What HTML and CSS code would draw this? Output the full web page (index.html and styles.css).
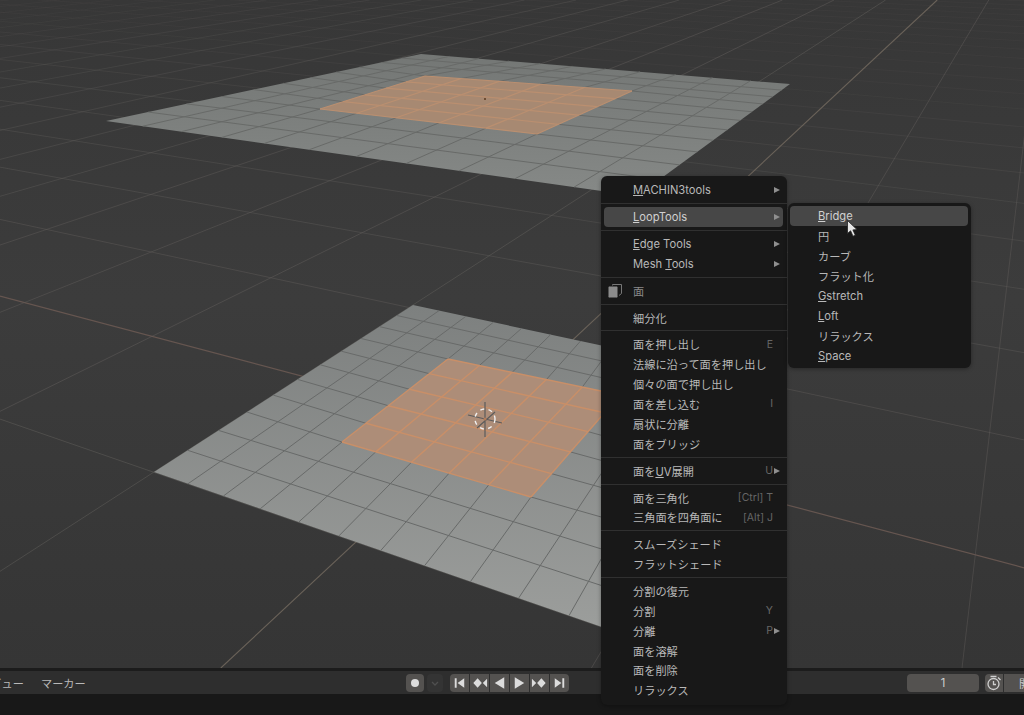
FILE: index.html
```html
<!DOCTYPE html>
<html lang="ja">
<head>
<meta charset="utf-8">
<title>Blender context menu</title>
<link rel="stylesheet" href="styles.css">
</head>
<body>
<div class="app">
  <main class="viewport">
    <svg class="scene" id="scene" viewBox="0 0 1024 668" xmlns="http://www.w3.org/2000/svg">
      <defs>
        <linearGradient id="bg" x1="0" y1="0" x2="0" y2="1">
          <stop offset="0" stop-color="#373737"/>
          <stop offset="0.45" stop-color="#3c3c3c"/>
          <stop offset="1" stop-color="#353535"/>
        </linearGradient>
        <linearGradient id="planeTop" gradientUnits="userSpaceOnUse" x1="0" y1="54" x2="0" y2="196">
          <stop offset="0" stop-color="#747775"/>
          <stop offset="1" stop-color="#868987"/>
        </linearGradient>
        <linearGradient id="planeBottom" gradientUnits="userSpaceOnUse" x1="0" y1="305" x2="0" y2="634">
          <stop offset="0" stop-color="#7d807f"/>
          <stop offset="1" stop-color="#9c9e9c"/>
        </linearGradient>
      </defs>
      <rect class="bg" width="1024" height="668"/>
      <g id="floor"></g>
      <g id="planes"></g>
      <g class="cursor3d">
        <path class="cursor-axes" d="M485 402V437M468 415L502 423M477 428L495 412"/>
        <circle class="cursor-ring" cx="485" cy="419" r="10"/>
        <circle class="cursor-dot" cx="485" cy="419" r="1.5"/>
      </g>
      <circle class="origin-dot" cx="485" cy="99" r="1"/>
    </svg>

    <nav class="menu menu-main">
      <div class="row"><span class="label"><u>M</u>ACHIN3tools</span><span class="arrow"></span></div>
      <div class="sep"></div>
      <div class="row active"><span class="label"><u>L</u>oopTools</span><span class="arrow"></span></div>
      <div class="sep"></div>
      <div class="row"><span class="label"><u>E</u>dge Tools</span><span class="arrow"></span></div>
      <div class="row"><span class="label">Mesh <u>T</u>ools</span><span class="arrow"></span></div>
      <div class="sep"></div>
      <div class="row row-title">
        <svg class="face-icon" viewBox="0 0 16 16" width="16" height="16">
          <path class="face-back" d="M5.5 3.5V1.5H14.5V10.5L12 12.5"/>
          <rect class="face-front" x="1" y="3" width="10" height="12" rx="1.5"/>
        </svg>
        <span class="label dim">面</span>
      </div>
      <div class="sep"></div>
      <div class="row"><span class="label">細分化</span></div>
      <div class="sep"></div>
      <div class="row"><span class="label">面を押し出し</span><span class="key">E</span></div>
      <div class="row"><span class="label">法線に沿って面を押し出し</span></div>
      <div class="row"><span class="label">個々の面で押し出し</span></div>
      <div class="row"><span class="label">面を差し込む</span><span class="key">I</span></div>
      <div class="row"><span class="label">扇状に分離</span></div>
      <div class="row"><span class="label">面をブリッジ</span></div>
      <div class="sep"></div>
      <div class="row"><span class="label">面を<u>U</u>V展開</span><span class="key">U</span><span class="arrow tight"></span></div>
      <div class="sep"></div>
      <div class="row"><span class="label">面を三角化</span><span class="key">[Ctrl] T</span></div>
      <div class="row"><span class="label">三角面を四角面に</span><span class="key">[Alt] J</span></div>
      <div class="sep"></div>
      <div class="row"><span class="label">スムーズシェード</span></div>
      <div class="row"><span class="label">フラットシェード</span></div>
      <div class="sep"></div>
      <div class="row"><span class="label">分割の復元</span></div>
      <div class="row"><span class="label">分割</span><span class="key">Y</span></div>
      <div class="row"><span class="label">分離</span><span class="key">P</span><span class="arrow tight"></span></div>
      <div class="row"><span class="label">面を溶解</span></div>
      <div class="row"><span class="label">面を削除</span></div>
      <div class="row"><span class="label">リラックス</span></div>
    </nav>

    <nav class="menu menu-sub">
      <div class="row active"><span class="label"><u>B</u>ridge</span></div>
      <div class="row"><span class="label">円</span></div>
      <div class="row"><span class="label">カーブ</span></div>
      <div class="row"><span class="label">フラット化</span></div>
      <div class="row"><span class="label"><u>G</u>stretch</span></div>
      <div class="row"><span class="label"><u>L</u>oft</span></div>
      <div class="row"><span class="label">リラックス</span></div>
      <div class="row"><span class="label"><u>S</u>pace</span></div>
    </nav>

    <svg class="pointer" viewBox="0 0 12 17" width="12" height="17">
      <path d="M0.5 0.5V13.5L3.6 10.8L6 16.2L8.3 15.2L5.9 9.9L10 9.6Z"/>
    </svg>
  </main>

  <footer class="timeline">
    <div class="tl-menus">
      <span>ビュー</span>
      <span>マーカー</span>
    </div>
    <div class="transport">
      <button class="btn btn-record" aria-label="record"><svg viewBox="0 0 18 18" width="18" height="18"><circle class="ico" cx="9" cy="9" r="4"/></svg></button>
      <button class="btn btn-drop" aria-label="options"><svg viewBox="0 0 16 18" width="16" height="18"><path class="ico-line" d="M5 8L8 11L11 8"/></svg></button>
      <div class="btn-group">
        <button class="btn" aria-label="jump start"><svg viewBox="0 0 20 18" width="20" height="18"><path class="ico" d="M5 4H7V14H5ZM15 4V14L8 9Z"/></svg></button>
        <button class="btn" aria-label="previous key"><svg viewBox="0 0 20 18" width="20" height="18"><path class="ico" d="M8 4L12.5 9L8 14L3.5 9ZM18 4.5V13.5L13.5 9Z"/></svg></button>
        <button class="btn" aria-label="play reverse"><svg viewBox="0 0 20 18" width="20" height="18"><path class="ico" d="M15 3V15L5 9Z"/></svg></button>
        <button class="btn" aria-label="play"><svg viewBox="0 0 20 18" width="20" height="18"><path class="ico" d="M5 3V15L15 9Z"/></svg></button>
        <button class="btn" aria-label="next key"><svg viewBox="0 0 20 18" width="20" height="18"><path class="ico" d="M2 4.5V13.5L6.5 9ZM12 4L16.5 9L12 14L7.5 9Z"/></svg></button>
        <button class="btn" aria-label="jump end"><svg viewBox="0 0 20 18" width="20" height="18"><path class="ico" d="M5 4V14L12 9ZM13 4H15V14H13Z"/></svg></button>
      </div>
    </div>
    <div class="frame-field">1</div>
    <div class="btn-group clock-group">
      <button class="btn" aria-label="clock"><svg viewBox="0 0 18 18" width="18" height="18"><circle class="ico-line" cx="8.5" cy="10" r="5.5"/><path class="ico-line" d="M8.5 7V10.5H11M5.5 2.5H11.5M13 3.5L15.5 6"/></svg></button>
      <button class="btn btn-cut">開始</button>
    </div>
  </footer>
  <div class="status"></div>
</div>
<script src="script.js"></script>
</body>
</html>
```

FILE: styles.css
```css
* { box-sizing: border-box; }
html, body { margin: 0; height: 100%; }
body {
  background: #181818;
  overflow: hidden;
  font-family: Inter, "Noto Sans CJK JP", "Liberation Sans", sans-serif;
  font-size: 11.2px;
  color: #b8b8b8;
}
.app { display: flex; flex-direction: column; height: 715px; width: 1024px; overflow: hidden; }

/* 3D viewport */
.viewport { position: relative; height: 668px; flex: none; }
.scene { display: block; width: 1024px; height: 668px; }
.bg { fill: url(#bg); }
.cursor-axes { stroke: #5c5c5c; stroke-width: 1.2; fill: none; }
.cursor-ring { fill: none; stroke: #f0f0f0; stroke-width: 1.4; stroke-dasharray: 4 4.4; }
.cursor-dot { fill: #b47b58; }
.origin-dot { fill: #5a3a20; }

/* Popup menus */
.menu {
  position: absolute;
  display: flex;
  flex-direction: column;
  background: #181818;
  border-radius: 6px;
  box-shadow: 0 1px 4px rgba(0, 0, 0, 0.35);
}
.menu-main { left: 601px; top: 176px; width: 186px; height: 529px; padding: 4px 4px 4px 3px; }
.menu-sub { left: 788px; top: 203px; width: 183px; height: 165px; padding: 3px 3px 3px 2px; }
.row {
  display: flex;
  align-items: center;
  flex: none;
  height: 19.85px;
  padding: 0 3px 0 29px;
  border-radius: 4px;
  white-space: nowrap;
}
.menu-sub .row { height: 20px; padding-left: 28px; }
.row.active { background: #474747; color: #d0d0d0; }
.row-title { padding-left: 3px; }
.label { flex: 1; }
.label u { text-underline-offset: 1px; }
.dim { color: #8a8a8a; padding-left: 10px; }
.key { color: #666; font-size: 10.5px; }
.key:last-child { margin-right: 7px; }
.arrow {
  width: 0;
  height: 0;
  border-left: 6px solid #8f8f8f;
  border-top: 3.5px solid transparent;
  border-bottom: 3.5px solid transparent;
}
.arrow.tight { margin-left: 1px; }
.sep { flex: none; height: 7.1px; position: relative; margin: 0 -4px 0 -3px; }
.sep::after {
  content: "";
  position: absolute;
  left: 0;
  right: 0;
  top: 3px;
  height: 1px;
  background: #303030;
}
.face-icon { flex: none; }
.face-back { fill: none; stroke: #777; stroke-width: 1; }
.face-front { fill: #8c8c8c; stroke: #181818; stroke-width: 1; }
.pointer { position: absolute; left: 847px; top: 220px; }
.pointer path { fill: #e6e6e6; stroke: #222; stroke-width: 0.8; }

/* Timeline header */
.timeline {
  flex: none;
  height: 26px;
  display: flex;
  align-items: center;
  background: #2e2e2e;
  border-top: 3px solid #1c1c1c;
}
.tl-menus {
  flex: none;
  display: flex;
  gap: 17px;
  width: 406px;
  color: #b8b8b8;
  overflow: hidden;
}
.tl-menus span:first-child { margin-left: -9.6px; }
.transport { flex: none; display: flex; align-items: center; width: 501px; }
.btn {
  display: flex;
  align-items: center;
  justify-content: center;
  flex: none;
  height: 18px;
  width: 19.8px;
  padding: 0;
  border: 0;
  background: #545250;
  font: inherit;
  color: inherit;
}
.btn-record { width: 18px; border-radius: 4px; }
.btn-drop { width: 16px; margin: 0 7px 0 3px; background: #343434; border-radius: 4px; }
.btn-group { display: flex; gap: 1px; border-radius: 4px; overflow: hidden; }
.btn-group .btn { width: 18.99px; }
.ico { fill: #dcdcdc; }
.btn-drop .ico-line { stroke: #4f4f4f; }
.ico-line { fill: none; stroke: #cfcfcf; stroke-width: 1.3; }
.frame-field {
  flex: none;
  width: 72px;
  height: 18px;
  line-height: 18px;
  text-align: center;
  background: #545250;
  border-radius: 4px;
  color: #d0d0d0;
}
.clock-group { margin-left: 6px; flex: none; }
.clock-group .btn { width: 18px; }
.clock-group .btn-cut { width: 40px; justify-content: flex-start; padding-left: 15px; white-space: nowrap; color: #c8c8c8; }
.status { flex: 1; background: #181818; }
```

FILE: script.js
```js
(function () {
  var NS = 'http://www.w3.org/2000/svg';
  var floor = document.getElementById('floor');
  var planes = document.getElementById('planes');

  function el(parent, name, attrs) {
    var e = document.createElementNS(NS, name);
    for (var k in attrs) e.setAttribute(k, attrs[k]);
    parent.appendChild(e);
    return e;
  }

  // Floor grid: two families of lines through two vanishing points.
  var VP1 = [-1530, -110], VP2 = [1053, -108], REF = 472;
  function line(x1, y1, x2, y2, color, w, op) {
    el(floor, 'line', { x1: x1, y1: y1, x2: x2, y2: y2, stroke: color, 'stroke-width': w, 'stroke-opacity': op });
  }
  var k, x;
  for (k = 0; k <= 26; k++) {
    x = 153 + 510 * k;
    var yAt = function (px) { return VP1[1] + (REF - VP1[1]) * (px - VP1[0]) / (x - VP1[0]); };
    var red = k === 1;
    line(0, yAt(0), 1024, yAt(1024), red ? '#665650' : '#5f5c5a', red ? 1.2 : 1, red ? 1 : Math.max(0.12, 0.55 - k * 0.04));
  }
  for (k = -30; k <= 5; k++) {
    x = 154 + 277 * k;
    var xAt = function (py) { return VP2[0] + (x - VP2[0]) * (py - VP2[1]) / (REF - VP2[1]); };
    var axis = k === 1;
    line(xAt(0), 0, xAt(668), 668, axis ? '#6a6259' : '#5f5c5a', axis ? 1.1 : 1, axis ? 1 : Math.max(0.12, 0.55 - Math.abs(k) * 0.03));
  }

  // Maps the unit square onto a quad. u runs from L to B, v from L to T.
  function quad(L, B, T, R) {
    var dx1 = B[0] - R[0], dx2 = T[0] - R[0], sx = L[0] - B[0] + R[0] - T[0];
    var dy1 = B[1] - R[1], dy2 = T[1] - R[1], sy = L[1] - B[1] + R[1] - T[1];
    var den = dx1 * dy2 - dx2 * dy1;
    var g = (sx * dy2 - dx2 * sy) / den, h = (dx1 * sy - sx * dy1) / den;
    var a = B[0] - L[0] + g * B[0], b = T[0] - L[0] + h * T[0];
    var d = B[1] - L[1] + g * B[1], e = T[1] - L[1] + h * T[1];
    return function (u, v) {
      var w = g * u + h * v + 1;
      return [(a * u + b * v + L[0]) / w, (d * u + e * v + L[1]) / w];
    };
  }
  function pts(list) { return list.map(function (p) { return p[0].toFixed(1) + ',' + p[1].toFixed(1); }).join(' '); }

  // Outer 11x11 plane with a 5x5 selected patch whose corners are given directly.
  function plane(outer, inner, fill, gridColor, orangeFill, orangeLine, sw, isw) {
    var f = quad(outer[0], outer[3], outer[1], outer[2]);
    var o = quad(inner[0], inner[3], inner[1], inner[2]);
    var N = 11, i;
    el(planes, 'polygon', { points: pts([outer[0], outer[3], outer[2], outer[1]]), fill: fill });
    function seg(a, b, color, width) {
      el(planes, 'line', { x1: a[0], y1: a[1], x2: b[0], y2: b[1], stroke: color, 'stroke-width': width });
    }
    for (i = 1; i < N; i++) {
      if (i >= 3 && i <= 8) {
        var c = (i - 3) / 5;
        seg(f(i / N, 0), o(c, 0), gridColor, sw);
        seg(o(c, 1), f(i / N, 1), gridColor, sw);
        seg(f(0, i / N), o(0, c), gridColor, sw);
        seg(o(1, c), f(1, i / N), gridColor, sw);
      } else {
        seg(f(i / N, 0), f(i / N, 1), gridColor, sw);
        seg(f(0, i / N), f(1, i / N), gridColor, sw);
      }
    }
    el(planes, 'polygon', { points: pts([inner[0], inner[3], inner[2], inner[1]]), fill: orangeFill });
    for (i = 0; i <= 5; i++) {
      seg(o(i / 5, 0), o(i / 5, 1), orangeLine, isw);
      seg(o(0, i / 5), o(1, i / 5), orangeLine, isw);
    }
  }

  // Corner order: left, top, right, bottom.
  plane([[106, 121], [421, 54], [790, 84], [637, 196]],
        [[320, 109], [425, 76], [632, 91], [537, 134]],
        'url(#planeTop)', '#686a68', '#a78972', '#ba8f70', 1, 1.2);
  plane([[154, 472], [413, 305], [744, 376], [622, 634]],
        [[342, 442], [448, 359], [620, 395], [531, 497]],
        'url(#planeBottom)', '#686a69', '#ad8d78', '#c98f68', 1, 1.4);
})();
```
